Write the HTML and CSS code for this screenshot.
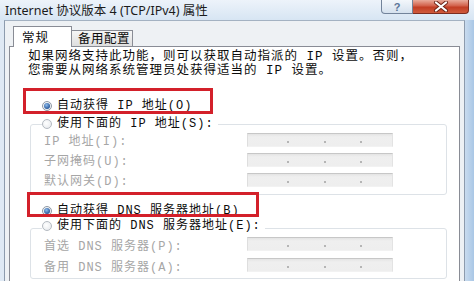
FILE: index.html
```html
<!DOCTYPE html>
<html lang="zh-CN">
<head>
<meta charset="utf-8">
<title>Internet 协议版本 4 (TCP/IPv4) 属性</title>
<link rel="stylesheet" href="styles.css">
</head>
<body>
<div class="window">
  <div class="titlebar">
    <span class="title">Internet 协议版本 4 (TCP/IPv4) 属性</span>
    <div class="caption-btns">
      <span class="cbtn help">?</span>
      <span class="cbtn close"><svg width="16" height="11" viewBox="0 0 16 11"><path d="M3 1.5 L13 9.5 M13 1.5 L3 9.5" stroke="#6b2418" stroke-width="4" stroke-linecap="round"/><path d="M3 1.5 L13 9.5 M13 1.5 L3 9.5" stroke="#fff" stroke-width="2.2" stroke-linecap="round"/></svg></span>
    </div>
  </div>
  <div class="frame">
    <div class="client">
      <div class="tabs">
        <div class="tab active">常规</div>
        <div class="tab">备用配置</div>
      </div>
      <div class="panel">
        <p class="intro">如果网络支持此功能，则可以获取自动指派的 IP 设置。否则，<br>您需要从网络系统管理员处获得适当的 IP 设置。</p>
        <div class="opt opt-ip-auto"><span class="radio on"></span>自动获得 IP 地址(O)</div>
        <fieldset class="group group-ip">
          <legend class="opt legend-ip"><span class="radio"></span>使用下面的 IP 地址(S):</legend>
          <div class="field-row"><span class="flabel">IP 地址(I):</span><span class="ipbox"><i></i><b></b><i></i><b></b><i></i><b></b><i></i></span></div>
          <div class="field-row"><span class="flabel">子网掩码(U):</span><span class="ipbox"><i></i><b></b><i></i><b></b><i></i><b></b><i></i></span></div>
          <div class="field-row"><span class="flabel">默认网关(D):</span><span class="ipbox"><i></i><b></b><i></i><b></b><i></i><b></b><i></i></span></div>
        </fieldset>
        <div class="opt opt-dns-auto"><span class="radio on"></span>自动获得 DNS 服务器地址(B)</div>
        <fieldset class="group group-dns">
          <legend class="opt legend-dns"><span class="radio"></span>使用下面的 DNS 服务器地址(E):</legend>
          <div class="field-row dns-row"><span class="flabel">首选 DNS 服务器(P):</span><span class="ipbox"><i></i><b></b><i></i><b></b><i></i><b></b><i></i></span></div>
          <div class="field-row dns-row"><span class="flabel">备用 DNS 服务器(A):</span><span class="ipbox"><i></i><b></b><i></i><b></b><i></i><b></b><i></i></span></div>
        </fieldset>
        <div class="mark mark-ip"></div>
        <div class="mark mark-dns"></div>
      </div>
    </div>
    <div class="edge"></div>
  </div>
</div>
</body>
</html>
```
FILE: styles.css
```css
html, body {
  margin: 0;
  padding: 0;
}
body {
  width: 474px;
  height: 281px;
  overflow: hidden;
  background: #dfe9f4;
  font-family: "Liberation Mono", "Noto Sans CJK SC", monospace;
  color: #0c0c0c;
}
.window {
  display: flex;
  flex-direction: column;
  height: 281px;
}
.titlebar {
  height: 20px;
  display: flex;
  padding-left: 5px;
  background: linear-gradient(#edf3fa, #d7e5f3);
}
.title {
  font-family: "Noto Sans", "Noto Sans CJK SC", sans-serif;
  font-size: 12.5px;
  line-height: 22px;
  color: #1b1b1b;
  white-space: nowrap;
}
.caption-btns {
  margin-left: auto;
  margin-right: 5px;
  display: flex;
  align-self: flex-start;
}
.cbtn {
  box-sizing: border-box;
  height: 14px;
  display: flex;
  align-items: center;
  justify-content: center;
}
.help {
  width: 32px;
  border: 1px solid #72839a;
  border-top: none;
  border-radius: 0 0 0 4px;
  background: linear-gradient(#f3f7fb, #d5e1ee);
  font-family: "Liberation Sans", sans-serif;
  font-weight: bold;
  font-size: 11px;
  color: #5a7597;
}
.close {
  width: 56px;
  border: 1px solid #7b2c20;
  border-top: none;
  border-left: none;
  border-radius: 0 0 4px 0;
  background: linear-gradient(#e9ab9b, #d2604a 45%, #c23d24 55%, #cf5a3c);
}
.frame {
  flex: 1;
  display: flex;
}
.client {
  flex: 1;
  margin-left: 4px;
  border-left: 1px solid #8d9bad;
  border-right: 1px solid #8d9bad;
  border-top: 1px solid #a4b2c2;
  background: #eef1f4;
  padding: 5px 4px 0 4px;
  display: flex;
  flex-direction: column;
}
.edge {
  width: 9px;
  background: linear-gradient(90deg, #c9dbee, #a9c7e6);
}
.tabs {
  height: 20px;
  display: flex;
  align-items: flex-end;
  padding-left: 4px;
  position: relative;
  z-index: 1;
  font-family: "Noto Sans CJK SC", sans-serif;
  font-size: 12.5px;
}
.tab {
  box-sizing: border-box;
  width: 61px;
  height: 16px;
  border: 1px solid #898c95;
  border-left: none;
  border-bottom: none;
  background: linear-gradient(#f6f6f6, #dedede);
  padding-left: 6px;
  line-height: 14px;
  letter-spacing: 0.5px;
}
.tab.active {
  width: 59px;
  height: 21px;
  margin-bottom: -1px;
  border-left: 1px solid #898c95;
  background: #fff;
  padding-left: 8px;
  line-height: 19px;
  letter-spacing: 1px;
}
.panel {
  flex: 1;
  position: relative;
  background: #fff;
  border: 1px solid #898c95;
  border-bottom: none;
  padding: 3px 0 0 18px;
}
.intro {
  margin: 0;
  font-size: 12.5px;
  letter-spacing: 1px;
  line-height: 14px;
  white-space: nowrap;
}
.opt {
  display: flex;
  align-items: center;
  gap: 5px;
  font-size: 12px;
  letter-spacing: 1px;
  line-height: 16px;
  margin-left: 14px;
  white-space: nowrap;
}
.opt-ip-auto {
  margin-top: 20px;
}
.radio {
  box-sizing: border-box;
  width: 10px;
  height: 10px;
  border-radius: 50%;
  border: 1px solid #b4bac1;
  background: radial-gradient(circle at 40% 40%, #ffffff, #e3e6ea);
  display: flex;
  align-items: center;
  justify-content: center;
  flex: none;
}
.radio.on {
  border-color: #8e98a4;
}
.radio.on::after {
  content: "";
  width: 6px;
  height: 6px;
  border-radius: 50%;
  background: radial-gradient(circle at 40% 35%, #8fbcec, #2a5a9c 70%);
}
.group {
  box-sizing: border-box;
  width: 417px;
  margin: 2px 0 0 2px;
  padding: 0 0 2px 0;
  border: 1px solid #dde2e7;
  border-radius: 3px;
  min-width: 0;
}
.opt.legend-ip,
.opt.legend-dns {
  margin-left: 11px;
  padding: 0 4px 0 0;
}
.opt.legend-dns {
  line-height: 12px;
  padding-bottom: 4px;
}
.field-row {
  display: grid;
  grid-template-columns: 203px 146px;
  height: 20px;
  align-items: center;
  padding-left: 13px;
}
.dns-row {
  height: 21px;
}
.flabel {
  font-size: 12px;
  letter-spacing: 1px;
  line-height: 16px;
  color: #a6a6a6;
  white-space: nowrap;
}
.ipbox {
  box-sizing: border-box;
  height: 14px;
  align-self: start;
  margin-top: 1px;
  display: grid;
  grid-template-columns: 38px 4px 33px 4px 32px 4px 1fr;
  background: linear-gradient(#e4e4e4, #efefef 25%, #eeeeee);
  border-top: 1px solid #c7c7c7;
  border-left: 1px solid #dedede;
  border-right: 1px solid #e3e3e3;
  border-bottom: 1px solid #f2f2f2;
}
.dns-row .ipbox {
  margin-top: 1px;
}
.ipbox b {
  display: block;
  width: 2px;
  height: 2px;
  margin: 7px auto 0;
  background: #b5b5b5;
}
.mark {
  position: absolute;
  box-sizing: border-box;
  border: 3px solid #d3202a;
}
.mark-ip {
  left: 13px;
  top: 41px;
  width: 190px;
  height: 26px;
}
.mark-dns {
  left: 17px;
  top: 145px;
  width: 232px;
  height: 25px;
}
.opt-dns-auto {
  margin-top: 10px;
  line-height: 12px;
}
.group-dns {
  margin-top: 3px;
  padding-bottom: 0;
}
```
